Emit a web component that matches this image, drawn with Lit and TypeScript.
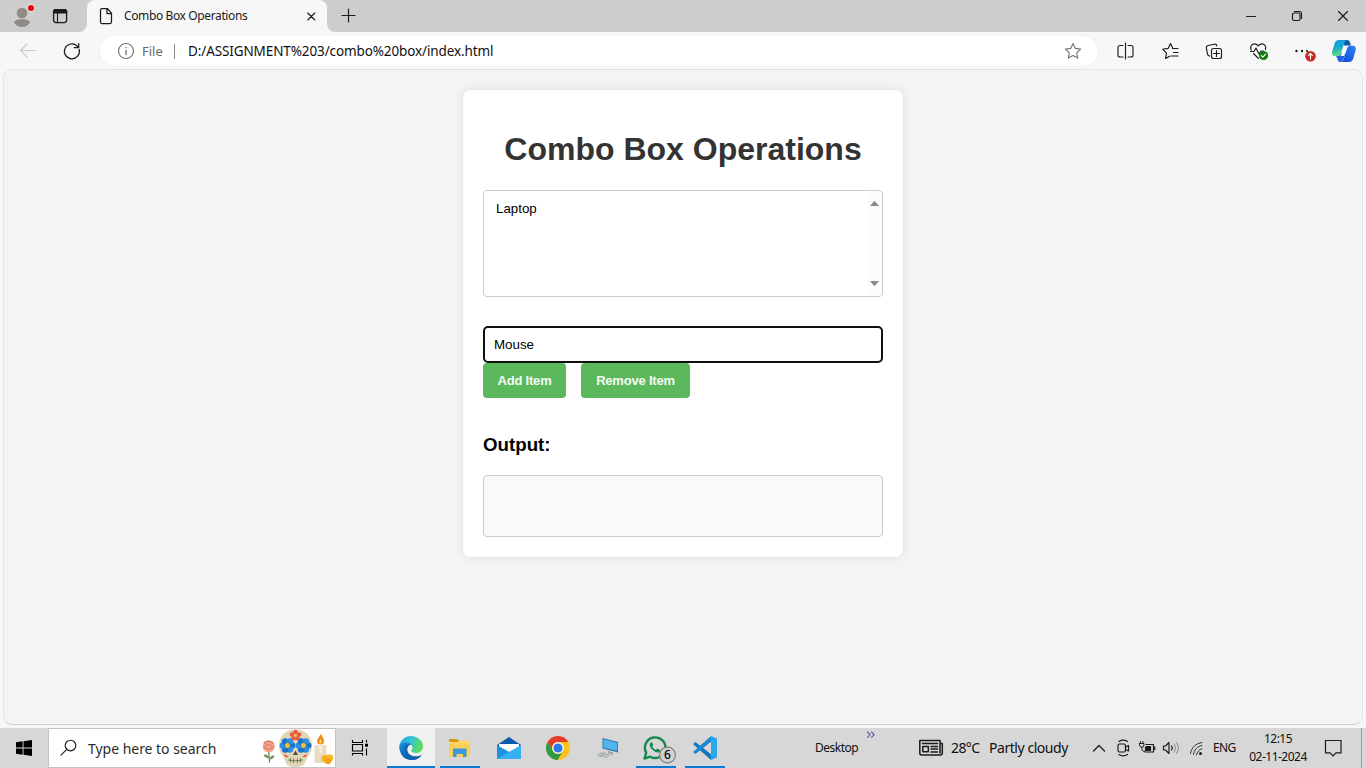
import { LitElement, html, css, svg } from "lit";
import { customElement, property, state } from "lit/decorators.js";

type Box = [number, number, number, number];

/** Window-space icon: the box is both the view box and the drawn size. */
const glyph = (box: Box, content: unknown) => html`<svg
  width=${box[2]} height=${box[3]} viewBox=${box.join(" ")} fill="none" stroke="#1b1b1b"
  stroke-width="1.15" stroke-linecap="round" stroke-linejoin="round">${content}</svg>`;

const base = css`
  :host { box-sizing: border-box; }
  * { box-sizing: border-box; }
  svg { display: block; flex: none; }
  .t { white-space: nowrap; flex: none; }
`;

@customElement("tab-strip")
class TabStrip extends LitElement {
  @property() title = "";
  static styles = [base, css`
    :host { display: flex; height: 32px; background: #cdcdcd; font: 12px/32px "Noto Sans", "Open Sans", sans-serif; color: #1b1b1b; }
    .lead { width: 79px; display: flex; padding-left: 8px; flex: none; }
    .tab { width: 256px; display: flex; flex: none; }
    .body { width: 240px; height: 32px; background: #f7f7f7; border-radius: 8px 8px 0 0; display: flex; }
    .name { width: 174px; font-size: 12px; letter-spacing: -0.38px; }
    .grow { flex: 1; }
  `];
  render() {
    return html`
      <div class="lead">
        ${glyph([8, 0, 36, 32], svg`
          <circle cx="22" cy="16" r="10.3" stroke="#d9d3cb" stroke-width="1"/>
          <g fill="#8f8b87" stroke="none"><circle cx="22" cy="13" r="5.3"/>
          <path d="M13.8 22.2C15.5 19.8 18.6 19 22 19s6.5.8 8.2 3.2C28.500 25.300 25.500 27 22 27s-6.500-1.700-8.200-4.800z"/></g>
          <circle cx="31" cy="8" r="3.600" fill="#e60012" stroke="#e8e2e2"/>`)}
        ${glyph([44, 0, 35, 32], svg`<rect x="53.600" y="9.600" width="13" height="13" rx="2.500" stroke-width="1.300"/>
          <path d="M53.500 13v-1a2.500 2.500 0 0 1 2.500-2.500h8.200a2.500 2.500 0 0 1 2.500 2.500v1z" fill="#1b1b1b"/><path d="M57.500 13v9.500"/>`)}
      </div>
      <div class="tab">
        ${glyph([79, 0, 8, 32], svg`<path d="M79 32h8v-8a8 8 0 0 1-8 8z" fill="#f7f7f7" stroke="none"/>`)}
        <div class="body">
          ${glyph([87, 0, 37, 32], svg`<path d="M102 8.500h5.300l4.200 4.600v9a1.500 1.500 0 0 1-1.500 1.500h-8a1.500 1.500 0 0 1-1.500-1.500V10a1.500 1.500 0 0 1 1.500-1.500zM107 8.800v4.700h4.300" stroke-width="1.250"/>`)}
          <span class="t name">${this.title}</span>
          ${glyph([298, 0, 29, 32], svg`<path d="M307.800 13l7 7M314.800 13l-7 7"/>`)}
        </div>
        ${glyph([327, 0, 8, 32], svg`<path d="M335 32h-8v-8a8 8 0 0 0 8 8z" fill="#f7f7f7" stroke="none"/>`)}
      </div>
      ${glyph([335, 0, 29, 32], svg`<path d="M342 15.500h13M348.500 9v13"/>`)}
      <div class="grow"></div>
      ${glyph([1228, 0, 46, 32], svg`<path d="M1246.500 16.500h9" stroke-width="1"/>`)}
      ${glyph([1274, 0, 46, 32], svg`<rect x="1292.500" y="13" width="7.500" height="7.500" rx="1.500"/><path d="M1294.500 11.500h5a2 2 0 0 1 2 2v5"/>`)}
      ${glyph([1320, 0, 46, 32], svg`<path d="M1338.500 11.500l9 9M1347.500 11.500l-9 9"/>`)}`;
  }
}

@customElement("tool-bar")
class ToolBar extends LitElement {
  @property() url = "";
  static styles = [base, css`
    :host { display: flex; height: 37px; background: #f7f7f7; font: 13px/30px "Noto Sans", "Open Sans", sans-serif; }
    .pill { width: 998px; height: 30px; margin-top: 4px; border-radius: 15px; background: #fff; display: flex; margin-right: 6px; box-shadow: 0 0 2px rgba(0,0,0,.07); flex: none; }
    .scheme { width: 32px; color: #6b6b6b; font-size: 13px; line-height: 31px; letter-spacing: 0; }
    .bar { width: 1px; height: 15px; margin: 8px 13px 0 0; background: #8a8a8a; }
    .url { flex: 1; color: #111; font-size: 13.5px; letter-spacing: -0.11px; }
  `];
  render() {
    return html`
      ${glyph([0, 32, 50, 37], svg`<path d="M20.500 50.500H36M27 44l-6.500 6.500L27 57" stroke="#c9c9c9"/>`)}
      ${glyph([50, 32, 50, 37], svg`<path d="M79.200 49.500a7.500 7.500 0 1 1-2.300-3.800l1.800 1.800M78.700 43.500v4.200h-4.500" stroke-width="1.250"/>`)}
      <div class="pill">
        ${glyph([100, 36, 42, 30], svg`<g stroke="#767676"><circle cx="126" cy="51" r="7.500"/><path d="M126 50.500v4M126 47.500v.1" stroke-width="1.400"/></g>`)}
        <span class="t scheme">File</span>
        <div class="bar"></div>
        <span class="t url">${this.url}</span>
        ${glyph([1058, 36, 40, 30], svg`<path d="M1073 43.500l2.300 4.900 5.300.7-3.900 3.700 1 5.300-4.700-2.600-4.700 2.600 1-5.300-3.900-3.700 5.300-.7z" stroke="#767676"/>`)}
      </div>
      ${glyph([1104, 32, 44, 37], svg`<path d="M1123 45.500h-3a2 2 0 0 0-2 2v7.500a2 2 0 0 0 2 2h3M1128 45.500h3a2 2 0 0 1 2 2v7.500a2 2 0 0 1-2 2h-3M1125.500 43v16"/>`)}
      ${glyph([1148, 32, 44, 37], svg`<path d="M1172.700 48l-2.200-4.500-2.400 4.900-5.500.8 3.900 3.900-.9 5.400 4.500-2.500M1172.500 48.500h5.500M1173.500 52.500h4.500M1171.500 56h6.500"/>`)}
      ${glyph([1192, 32, 44, 37], svg`<path d="M1209.500 56c-1.600-.4-2-1.500-2.200-2.600l-.9-5.400c-.3-1.600.7-2.300 1.700-2.500l6.300-1.300c1.500-.3 2.200.5 2.400 1.700"/>
        <rect x="1211.500" y="48.500" width="10" height="10" rx="2"/><path d="M1216.500 50.500v6M1213.500 53.500h6"/>`)}
      ${glyph([1236, 32, 44, 37], svg`<path d="M1251.200 50c-1.500-3 .2-5.800 3-6.100 2-.2 3.200 1 4 2 .8-1 2-2.200 4-2 2.800.3 4.200 3 3.200 5.600M1253.500 53.500l5 5M1250.500 51.500h3.500l2-3.500 3 6 2-3h2.500"/>
        <circle cx="1263.500" cy="55.500" r="4.600" fill="#107c10" stroke="none"/><path d="M1261.300 55.700l1.600 1.500 2.700-3" stroke="#fff"/>`)}
      ${glyph([1280, 32, 44, 37], svg`<g fill="#1b1b1b" stroke="none"><circle cx="1296.500" cy="51" r="1.200"/><circle cx="1302" cy="51" r="1.200"/><circle cx="1307" cy="51" r="1.100"/></g>
        <circle cx="1310.500" cy="56.300" r="5.300" fill="#c42b1c" stroke="none"/><path d="M1310.500 59v-5.300M1308.600 55.400l1.900-1.900 1.900 1.900" stroke="#fff"/>`)}
      ${glyph([1324, 32, 42, 37], svg`
        <defs>
          <linearGradient id="ca" x1="0" y1="0" x2=".2" y2="1"><stop offset="0" stop-color="#169bdc"/><stop offset=".5" stop-color="#18a7cf"/><stop offset="1" stop-color="#62dc84"/></linearGradient>
          <linearGradient id="cb" x1="1" y1="0" x2="0" y2="1"><stop offset="0" stop-color="#2a86ee"/><stop offset="1" stop-color="#1546d9"/></linearGradient>
        </defs>
        <g stroke="none">
        <path d="M1342.500 40h4.500c1.800 0 2.600 1.200 3 2.600l1 3h-7z" fill="#0f5aa8"/>
        <path d="M1339 40h7.500c-1.500 1-2 2.300-2.600 4.200l-3 9.300c-.5 1.600-1.500 2.500-3.300 2.500h-2.400c-3 0-3.700-2-3-4.600l2.200-7.500c.7-2.600 2-3.900 4.600-3.900z" fill="url(#ca)"/>
        <path d="M1349 62h-7.500c1.500-1 2-2.300 2.600-4.200l3-9.300c.5-1.600 1.500-2.700 3.300-2.700h2.200c3 0 3.700 2.200 3 4.800l-2.200 7.500c-.7 2.600-2 3.900-4.400 3.900z" fill="url(#cb)"/>
        <path d="M1335.500 56h2.500c1.500 0 2.500-1 3-2.500l.3-.8h4.300l-1.800 5.500c-.6 1.800-1.200 3-2.700 3.800h-1.400c-1.200-.3-1.600-1-2-2.300-.5-1.900-1-3.300-2.200-3.700z" fill="#1d62e4"/>
        <path d="M1344 46h3.400l-3.300 10h-3.400z" fill="#f7f7f7"/></g>`)}`;
  }
}

@customElement("combo-page")
class ComboPage extends LitElement {
  @state() private items = ["Laptop"];
  @state() private draft = "Mouse";
  static styles = [base, css`
    :host { display: block; height: 659px; background: #f7f7f7; padding: 0 3px 3px; font-family: Arial, "Liberation Sans", sans-serif; }
    .view { height: 656px; background: #f4f4f4; border: 1px solid #e6e6e6; border-bottom-color: #d0d0d0; border-radius: 9px; display: flex; justify-content: center; align-items: flex-start; padding-top: 20px; }
    .card { width: 440px; height: 467px; background: #fff; border-radius: 8px; padding: 20px; box-shadow: 0 0 10px rgba(0,0,0,.1); }
    h1 { margin: 21px 0 22px; font-size: 32px; line-height: 37px; text-align: center; color: #333; white-space: nowrap; }
    .list { height: 107px; border: 1px solid #ccc; border-radius: 4px; display: flex; justify-content: space-between; font-size: 13.333px; }
    .opts { padding: 10px 12px; line-height: 16px; }
    .scroll { width: 15px; background: #fcfcfc; border-radius: 0 4px 4px 0; display: flex; flex-direction: column; justify-content: space-between; align-items: flex-start; padding: 10px 0 10px 3px; }
    .field { margin-top: 29px; height: 37px; border: 2px solid #101010; border-radius: 5px; padding: 0 9px; font-size: 13.333px; line-height: 33px; }
    .row { display: flex; gap: 15px; }
    .btn { height: 35px; border-radius: 4px; background: #5cb85c; color: #f4faf4; font-size: 13px; font-weight: bold; line-height: 35px; text-align: center; width: 83px; white-space: nowrap; letter-spacing: -0.2px; }
    .btn.wide { width: 109px; }
    h3 { margin: 36px 0 20px; font-size: 18.72px; line-height: 21px; color: #000; }
    .out { height: 62px; border: 1px solid #ccc; border-radius: 4px; background: #f9f9f9; }
  `];
  render() {
    return html`<div class="view"><div class="card">
      <h1>Combo Box Operations</h1>
      <div class="list">
        <div class="opts">${this.items.map((i) => html`<div>${i}</div>`)}</div>
        <div class="scroll">
          ${glyph([0, 0, 9, 5], svg`<path d="M0 5h9L5 .200h-1z" fill="#8a8a8a" stroke="none"/>`)}
          ${glyph([0, 0, 9, 5], svg`<path d="M0 0h9L5 4.800h-1z" fill="#8a8a8a" stroke="none"/>`)}
        </div>
      </div>
      <div class="field">${this.draft}</div>
      <div class="row"><div class="btn">Add Item</div><div class="btn wide">Remove Item</div></div>
      <h3>Output:</h3>
      <div class="out"></div>
    </div></div>`;
  }
}

const petals = (cx: number, cy: number) => [0, 60, 120, 180, 240, 300].map((a) => svg`
  <circle cx=${cx + 4.6 * Math.cos((a * Math.PI) / 180)} cy=${cy + 4.6 * Math.sin((a * Math.PI) / 180)} r="3.300" fill=${a % 120 ? "#2a8fe6" : "#1673cf"}/>`);

@customElement("task-bar")
class TaskBar extends LitElement {
  static styles = [base, css`
    :host { display: flex; height: 40px; background: #d7d7d7; color: #111; font: 12px/40px "Noto Sans", "Open Sans", sans-serif; }
    .search { width: 288px; border: 1px solid #c4c4c4; background: #fff; display: flex; flex: none; color: #2b2b2b; }
    .search .t { width: 171px; font-size: 14px; line-height: 39px; letter-spacing: -0.03px; }
    .app { width: 49px; height: 40px; display: flex; flex: none; justify-content: center; }
    .app.run { box-shadow: inset 0 -2px #0a78d4; width: 40px; margin: 0 4.500px; }
    .app.on { width: 48px; margin: 0 0 0 3px; background: #f0f0f0; box-shadow: inset 0 -2px #0a78d4; }
    .desk { width: 51px; font-size: 12px; letter-spacing: -0.5px; margin-left: 86px; }
    .temp { width: 38px; font-size: 14px; letter-spacing: -0.6px; }
    .sky { width: 95px; font-size: 14px; letter-spacing: -0.45px; }
    .lang { width: 30px; font-size: 12px; letter-spacing: -0.6px; }
    .clock { width: 70px; text-align: center; line-height: 18px; padding-top: 2px; font-size: 12px; letter-spacing: -0.5px; }
    .peek { width: 1px; height: 40px; background: #9a9a9a; }
  `];
  render() {
    return html`
      ${glyph([0, 728, 48, 40], svg`<path d="M16 742.300l6.600-1v6.200H16zM23.500 741.200l8.500-1.200v7.500h-8.500zM16 748.500h6.600v6.200l-6.600-1zM23.500 748.500h8.500v7.500l-8.500-1.200z" fill="#000" stroke="none"/>`)}
      <div class="search">
        ${glyph([49, 729, 39, 38], svg`<circle cx="70.500" cy="745.500" r="5.300"/><path d="M66.500 749.700l-5.500 5.500"/>`)}
        <span class="t">Type here to search</span>
        ${glyph([259, 729, 76, 38], svg`<g stroke="none">
          <path d="M268.500 749l1 13" stroke="#5d7f4a" stroke-width="1.200"/><path d="M269 757c-2-3-4-3-5.500-2 1 2 3 3.500 5.500 3zM269.500 759c1-3 3-4 5-3.500-.5 2.500-2.500 4-5 4z" fill="#6f9158"/>
          <circle cx="268.800" cy="746.500" r="6" fill="#f0a48c"/><path d="M264 743c3-3 7-2 9 0M264 747c2 3 7 3 10-1M266 746c1-2 4-2 5.500 0" stroke="#e07a66"/>
          <path d="M279 745.500c0-10 7-16 16.500-16s16.500 6 16.500 16c0 6-2.500 9-4.500 11.500-1 2-1.500 4-2.500 6-1.500 3-5 4-9.500 4s-8-1-9.500-4c-1-2-1.500-4-2.500-6-2-2.500-4.500-5.500-4.500-11.500z" fill="#e2d5b3"/>
          ${petals(287.5, 745.5)}${petals(303.5, 745.5)}
          <g fill="#f4c33d" stroke="#1565b8" stroke-width=".8"><circle cx="287.500" cy="745.500" r="3"/><circle cx="303.500" cy="745.500" r="3"/></g>
          <g fill="#e8584a"><circle cx="295.500" cy="732" r="2.300"/><circle cx="292" cy="734.500" r="2.300"/><circle cx="299" cy="734.500" r="2.300"/><circle cx="293.500" cy="738.200" r="2.300"/><circle cx="297.500" cy="738.200" r="2.300"/><path d="M284 754.500c2 0 3.500 1 4.500 2.500-2.500.5-4.500-.5-4.500-2.500zM307 754.500c-2 0-3.500 1-4.500 2.500 2.500.5 4.500-.5 4.500-2.500z"/></g>
          <circle cx="295.500" cy="735.500" r="1.500" fill="#f4c33d"/><path d="M295.500 750.500l-2.500 4.500h5z" fill="#59483e"/>
          <path d="M288.500 760c4.500 1 9.500 1 14 0M290.500 758.500v3.500M293.500 759v3.500M297.500 759v3.500M300.500 758.500v3.500" stroke="#667c55" stroke-width="1"/>
          <rect x="314.500" y="745" width="12" height="18" rx="1.500" fill="#e9dcc0"/><path d="M318 745h4v7c0 2-2 2-2 0z" fill="#f6eddb"/>
          <path d="M320.500 734c3 4 3.500 5 3.500 7a3.500 3.500 0 0 1-7 0c0-2 2.500-4 3.500-7z" fill="#f18b1f"/><path d="M320.500 739c1.500 2 1.500 4 0 4.500-1.500-.5-1.500-2.500 0-4.500z" fill="#ffe05a"/>
          <circle cx="325" cy="758.500" r="3.500" fill="#f5b21e"/><circle cx="329.500" cy="758" r="3.800" fill="#f7ba2b"/><circle cx="328" cy="761" r="3.200" fill="#f0a315"/></g>`)}
      </div>
      ${glyph([336, 728, 48, 40], svg`<g stroke="#000" stroke-linecap="butt" stroke-linejoin="miter"><path d="M352.500 740v2.500h10V740M352.500 755.500v-2h10v2M352.500 744.500h10v6.500h-10zM366.500 740v2.500M366.500 748.500v7"/><path d="M365 743.700h3v3h-3z" fill="#000" stroke="none"/></g>`)}
      <div class="app on">${glyph([399, 728, 24, 40], svg`
        <defs><linearGradient id="ea" x1="0" y1="0" x2="1" y2=".3"><stop offset="0" stop-color="#1f9fe0"/><stop offset=".5" stop-color="#2fc2df"/><stop offset="1" stop-color="#5fdc58"/></linearGradient>
        <linearGradient id="eb" x1="0" y1="0" x2=".6" y2="1"><stop offset="0" stop-color="#1a93da"/><stop offset="1" stop-color="#0a4fa4"/></linearGradient></defs>
        <g stroke="none"><path d="M399.300 746.500C400 740.500 405 736 411 736c7 0 12 5.200 12 10.500 0 4-3 6.500-6.800 6.500-3.200 0-5-1.200-5-2.200 0-.7 1.300-1.200 1.300-3 0-3-3.500-5-7-5-2.800 0-5 1.300-6.200 3.700z" fill="url(#ea)"/>
        <path d="M399.200 746c1.400-2.500 3.700-3.700 6.500-3.700 2.600 0 4.800 1 6 2.500-3 0-5 2.300-5 5 0 4 3.500 7.200 8.500 7.200 2.200 0 4.500-.8 6-1.800-2 3.200-5.800 4.900-9.700 4.900-7 0-12.300-5.500-12.300-14.100z" fill="url(#eb)"/>
        <path d="M406.500 744.500c-3.500 5.500-.5 12.800 5.500 15.500 4 .1 8-2 9.700-5.200-5 2.600-10.500 1.800-13-1.300-1.800-2.300-2-6 .3-8.500z" fill="#0f63b5"/></g>`)}</div>
      <div class="app run">${glyph([447, 728, 26, 40], svg`<g stroke="none"><path d="M449 739h8l2 2v6h-10z" fill="#d99a12"/><path d="M449 742h10l1.500-1.500H470V757h-21z" fill="#ffd765"/><path d="M449 743.500h21V757h-21z" fill="#fccf57"/><path d="M453 748.500h13.500v8.500h-3.500v-3h-6.500v3H453z" fill="#3b97de"/></g>`)}</div>
      <div class="app">${glyph([496, 728, 26, 40], svg`<g stroke="none"><path d="M497 745l12-8 12 8v6h-24z" fill="#0d59ae"/><path d="M499 744h20v8h-20z" fill="#fff"/><path d="M497 745l24 14h-24z" fill="#1c93e0"/><path d="M521 745v14h-24l14-8.200z" fill="#36b0f0"/></g>`)}</div>
      <div class="app">${glyph([545, 728, 26, 40], svg`<g stroke="none"><circle cx="558" cy="748" r="12" fill="#fbc31b"/><path d="M547.600 742a12 12 0 0 1 20.800 0H558a6 6 0 0 0-5.200 9z" fill="#e33b2e"/><path d="M547.600 742a12 12 0 0 0 9.900 18l5.700-9a6 6 0 0 1-10.400 0z" fill="#2a9a48"/><circle cx="558" cy="748" r="5.800" fill="#fff"/><circle cx="558" cy="748" r="4.600" fill="#2e79ea"/></g>`)}</div>
      <div class="app">${glyph([594, 728, 26, 40], svg`<g stroke="none"><path d="M602.500 738l15.500 4v10.500l-15.500-4z" fill="#2d78aa"/><path d="M603.500 739.300l13.500 3.500v8.300l-13.500-3.500z" fill="#52b5f0"/><path d="M608 751l5 1.300v3h-5z" fill="#9aa4aa"/><path d="M602 751.500l10 2.500-5 4.500-11-2.700z" fill="#c5c9cc"/><path d="M600 753l9 2.200M598 754.800l9 2.200M605 752.500l-5 4.500" stroke="#929ba1" stroke-width=".7"/></g>`)}</div>
      <div class="app run">${glyph([636, 728, 41, 40], svg`
        <path d="M645.500 758.500l1.700-5.800a10.300 10.300 0 1 1 4 4z" stroke="#168a4e" stroke-width="2.400"/>
        <path d="M652 742.500c-2 1.200-1.500 4.200 1.200 7s6 4 7.600 2.200c.7-.9.500-1.600-.2-2l-2-1c-.8-.3-1.200.8-1.800 1-1.300-.2-3.200-2-3.500-3.200.2-.7 1-1 .8-1.800l-.8-1.900c-.3-.5-.8-.6-1.300-.3z" fill="#168a4e" stroke="none"/>
        <circle cx="668.500" cy="755" r="7.900" fill="#d2d2d2" fill-opacity=".94" stroke="#7c7c7c"/>
        <text x="668.500" y="759.300" text-anchor="middle" font-family="Noto Sans" font-size="12" font-weight="500" fill="#000" stroke="none">6</text>`)}</div>
      <div class="app run">${glyph([692, 728, 26, 40], svg`<g stroke="none"><path d="M711 736l6 2.500v19l-6 2.500z" fill="#2ba7ee"/><path d="M693 744l2.500-2 15.500 12.200v5.800z" fill="#1275bd"/><path d="M693 752l2.500 2L711 741.800V736z" fill="#1a8ad4"/></g>`)}</div>
      <span class="t desk">Desktop</span>
      ${glyph([866, 728, 53, 40], svg`<path d="M867.500 732l2.700 2.700-2.700 2.700M871.500 732l2.700 2.700-2.700 2.700" stroke="#5a5aa8"/>`)}
      ${glyph([919, 728, 32, 40], svg`<g stroke-width="1.500"><path d="M940 741v-.5h-20.200V753a2 2 0 0 0 2 2h18.500a2 2 0 0 0 2-2v-9.500H940M940 741v12M922.500 743.500h15M931 746.500h6.500M931 749h6.500M931 752h6.500"/><path d="M922.800 746.500h5.500v5.200h-5.500z"/></g>`)}
      <span class="t temp">28°C</span><span class="t sky">Partly cloudy</span>
      ${glyph([1084, 728, 129, 40], svg`
        <path d="M1093.500 751l5.500-5.500 5.500 5.500" stroke-width="1.300"/>
        <g stroke-width="1.200"><rect x="1118" y="744" width="7.500" height="8" rx="1.500"/><path d="M1125.500 747l3-1.500v5.500l-3-1.500M1119 741.500c2.500-1.500 6-1.500 8.500 0M1119 754.500c2.500 1.500 6 1.500 8.500 0"/></g>
        <path d="M1146 744.500h7.500v7.500h-8.500M1153.800 747h1v2.500h-1"/><path d="M1146.500 746.500h4v4h-5v-3z" fill="#1b1b1b"/><path d="M1139.500 743.500h4.500v1.500a2.200 2.200 0 0 1-4.500 0zM1140.500 743v-1.500M1143 743v-1.500M1141.700 747.500c0 2.500.5 4 3 4" stroke-width="1"/>
        <path d="M1163.500 746h2l3.500-3.500v11l-3.500-3.500h-2z"/><path d="M1171.500 746c1 1.200 1 2.800 0 4"/><path d="M1174 744c2 2.500 2 5.500 0 8M1176.500 742.500c2.500 3.500 2.500 7.500 0 11" stroke="#999"/>
        <path d="M1190.500 753.500c1-6 5-10 11.500-11M1193.500 754.500c.5-4.500 3.500-8 8.500-9M1196.500 755c.5-3 2.500-5.500 5.500-6.300" stroke="#333" stroke-width="1"/><circle cx="1200.500" cy="753.500" r="1.500" fill="#1b1b1b" stroke="none"/>`)}
      <span class="t lang">ENG</span>
      <div class="clock"><div>12:15</div><div>02-11-2024</div></div>
      ${glyph([1313, 728, 48, 40], svg`<path d="M1325.500 740.500h15.500v12.300h-5l-3 3-3-3h-4.500z" stroke-width="1.200" stroke-linejoin="miter"/>`)}
      <div class="peek"></div>`;
  }
}

@customElement("app-root")
class AppRoot extends LitElement {
  static styles = css`:host { display: block; width: 1366px; height: 768px; overflow: hidden; background: #f7f7f7; }`;
  render() {
    return html`
      <tab-strip title="Combo Box Operations"></tab-strip>
      <tool-bar url="D:/ASSIGNMENT%203/combo%20box/index.html"></tool-bar>
      <combo-page></combo-page>
      <task-bar></task-bar>`;
  }
}
